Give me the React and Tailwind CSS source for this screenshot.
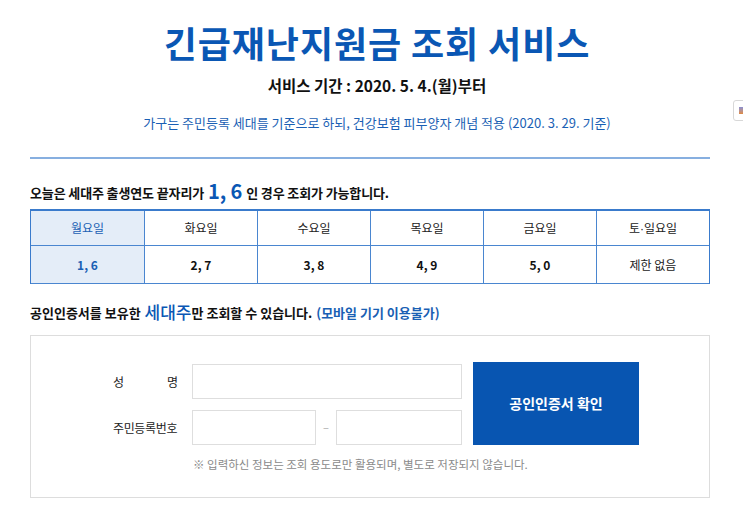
const days = [
  { day: "월요일", nums: "1, 6", today: true },
  { day: "화요일", nums: "2, 7" },
  { day: "수요일", nums: "3, 8" },
  { day: "목요일", nums: "4, 9" },
  { day: "금요일", nums: "5, 0" },
  { day: "토·일요일", nums: "제한 없음", plain: true },
];

export default function App() {
  return (
    <div
      className="relative min-h-[519px] bg-white text-[#222]"
      style={{ fontFamily: '"Noto Sans CJK KR", "Noto Sans", sans-serif' }}
    >
      {/* floating widget cut at the right edge */}
      <div className="absolute left-[733px] top-[100px] w-[16px] h-[21px] rounded-[3px] border border-[#d8d8d8] bg-white flex items-center justify-center">
        <div className="w-[5px] h-[7px] bg-gradient-to-b from-[#8a8fd0] to-[#e08a3a]" />
      </div>

      <div className="w-[680px] ml-[30px] pt-[18px]">
        {/* Header */}
        <div className="pl-[14px] text-center">
          <h1 className="text-[36px] leading-[48px] font-bold text-[#0a57b4] tracking-[0.025em]">
            긴급재난지원금 조회 서비스
          </h1>
          <p className="mt-[8px] text-[15.5px] leading-[22px] font-bold text-[#111]">
            서비스 기간 : 2020. 5. 4.(월)부터
          </p>
          <p className="mt-[18px] text-[13px] leading-[18px] text-[#1a5fb4]">
            가구는 주민등록 세대를 기준으로 하되, 건강보험 피부양자 개념 적용 (2020. 3. 29. 기준)
          </p>
        </div>

        <div className="mt-[25px] h-[2px] bg-[#87afe0]" />

        {/* Today */}
        <p className="mt-[20px] flex items-end gap-[4px] text-[13px] leading-[20px] font-bold text-[#111] tracking-[-0.01em]">
          <span>오늘은 세대주 출생연도 끝자리가</span>
          <span className="text-[20px] leading-[24px] text-[#0a57b4]">1, 6</span>
          <span>인 경우 조회가 가능합니다.</span>
        </p>

        <div className="mt-[6px] grid grid-cols-6 border-t-2 border-l border-r border-[#3a7bcc] text-[12px]">
          {days.map((d, i) => (
            <div
              key={d.day}
              className={`h-[35px] flex items-center justify-center border-b border-[#4a86d0] ${i > 0 ? "border-l" : ""} ${d.today ? "bg-[#e4edf8] text-[#1a5fb4]" : "text-[#222]"}`}
            >
              {d.plain ? (
                <span>
                  토<span style={{ fontFamily: '"Liberation Sans", sans-serif' }}>·</span>일요일
                </span>
              ) : (
                d.day
              )}
            </div>
          ))}
          {days.map((d, i) => (
            <div
              key={d.nums}
              className={`h-[38px] flex items-center justify-center border-b border-[#4a86d0] ${i > 0 ? "border-l" : ""} ${d.today ? "bg-[#e4edf8] text-[#1a5fb4] font-bold" : d.plain ? "text-[#222]" : "text-[#111] font-bold"}`}
            >
              {d.nums}
            </div>
          ))}
        </div>

        {/* Notice */}
        <p className="mt-[17px] flex items-end gap-[4px] text-[13px] leading-[20px] font-bold text-[#111]">
          <span>공인인증서를 보유한</span>
          <span className="text-[17px] leading-[22px] font-medium text-[#0a57b4] -mr-[4px]">세대주</span>
          <span>만 조회할 수 있습니다.</span>
          <span className="text-[#1a5fb4]">(모바일 기기 이용불가)</span>
        </p>

        {/* Form */}
        <div className="mt-[12px] h-[163px] border border-[#dddddd] pl-[82px] pt-[28px]">
          <div className="flex gap-[11px]">
            <div className="flex flex-col gap-[11px]">
              <div className="flex items-center gap-[14px]">
                <label className="w-[65px] flex justify-between text-[12px] text-[#222]">
                  <span>성</span>
                  <span>명</span>
                </label>
                <input className="w-[270px] h-[35px] border border-[#dedede] outline-none" />
              </div>
              <div className="flex items-center gap-[14px]">
                <label className="w-[65px] text-[12px] text-[#222] tracking-[-0.03em]">주민등록번호</label>
                <div className="flex items-center">
                  <input className="w-[124px] h-[35px] border border-[#dedede] outline-none" />
                  <span className="w-[20px] text-center text-[#aaa] text-[11px]">–</span>
                  <input className="w-[126px] h-[35px] border border-[#dedede] outline-none" />
                </div>
              </div>
            </div>
            <button className="w-[166px] h-[83px] bg-[#0855b1] text-white text-[14px] font-bold -mt-[2px]">
              공인인증서 확인
            </button>
          </div>
          <p className="mt-[11px] ml-[80px] text-[11.5px] text-[#8a8a8a]">
            ※ 입력하신 정보는 조회 용도로만 활용되며, 별도로 저장되지 않습니다.
          </p>
        </div>
      </div>
    </div>
  );
}
